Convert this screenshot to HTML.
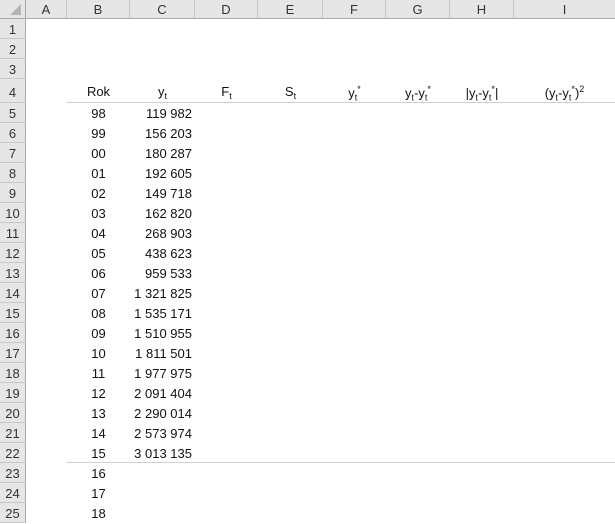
<!DOCTYPE html>
<html><head><style>
body{margin:0;width:615px;height:523px;overflow:hidden;background:#fff;font-family:"Liberation Sans",Arial,sans-serif;font-size:13px;color:#111;position:relative}
.hdr{position:absolute;top:0;left:0;width:615px;height:19px;background:#e6e6e6;border-bottom:1px solid #aaa;box-sizing:border-box}
.ch{position:absolute;top:0;height:18px;line-height:19px;text-align:center;border-right:1px solid #c8c8c8;box-sizing:border-box;color:#333}
.rh{position:absolute;left:0;width:26px;height:20px;line-height:21px;background:#e6e6e6;border-right:1px solid #aaa;border-bottom:1px solid #c8c8c8;box-sizing:border-box;text-align:center;color:#333}
.c{position:absolute;white-space:nowrap}
.b{position:absolute;left:67px;width:63px;text-align:center}
.v{position:absolute;left:130px;width:62px;text-align:right}
.tri{position:absolute;left:10px;top:4px;width:0;height:0;border-left:11px solid transparent;border-bottom:11px solid #b5b5b5}
sub{font-size:9px;vertical-align:-3px}
sup{font-size:9px}
</style></head><body>
<div class="hdr"></div>
<div class="ch" style="left:0;width:26px;border-right:1px solid #aaa"><div class="tri"></div></div>
<div class="ch" style="left:26px;width:41px">A</div>
<div class="ch" style="left:67px;width:63px">B</div>
<div class="ch" style="left:130px;width:65px">C</div>
<div class="ch" style="left:195px;width:63px">D</div>
<div class="ch" style="left:258px;width:65px">E</div>
<div class="ch" style="left:323px;width:63px">F</div>
<div class="ch" style="left:386px;width:64px">G</div>
<div class="ch" style="left:450px;width:64px">H</div>
<div class="ch" style="left:514px;width:101px;border:none">I</div>

<div class="rh" style="top:19px">1</div>
<div class="rh" style="top:39px">2</div>
<div class="rh" style="top:59px">3</div>
<div class="rh" style="top:79px;height:24px;line-height:27px">4</div>
<div class="rh" style="top:103px">5</div>
<div class="rh" style="top:123px">6</div>
<div class="rh" style="top:143px">7</div>
<div class="rh" style="top:163px">8</div>
<div class="rh" style="top:183px">9</div>
<div class="rh" style="top:203px">10</div>
<div class="rh" style="top:223px">11</div>
<div class="rh" style="top:243px">12</div>
<div class="rh" style="top:263px">13</div>
<div class="rh" style="top:283px">14</div>
<div class="rh" style="top:303px">15</div>
<div class="rh" style="top:323px">16</div>
<div class="rh" style="top:343px">17</div>
<div class="rh" style="top:363px">18</div>
<div class="rh" style="top:383px">19</div>
<div class="rh" style="top:403px">20</div>
<div class="rh" style="top:423px">21</div>
<div class="rh" style="top:443px">22</div>
<div class="rh" style="top:463px">23</div>
<div class="rh" style="top:483px">24</div>
<div class="rh" style="top:503px">25</div>

<div style="position:absolute;left:66px;top:102px;width:549px;height:1px;background:#d0d0d0"></div>
<div style="position:absolute;left:66px;top:462px;width:549px;height:1px;background:#d0d0d0"></div>
<div class="c" style="left:67px;width:63px;top:84px;text-align:center">Rok</div>
<div class="c" style="left:130px;width:65px;top:84px;text-align:center">y<sub>t</sub></div>
<div class="c" style="left:195px;width:63px;top:84px;text-align:center">F<sub>t</sub></div>
<div class="c" style="left:258px;width:65px;top:84px;text-align:center">S<sub>t</sub></div>
<div class="c" style="left:323px;width:63px;top:84px;text-align:center">y<sub>t</sub><sup>*</sup></div>
<div class="c" style="left:386px;width:64px;top:84px;text-align:center">y<sub>t</sub>-y<sub>t</sub><sup>*</sup></div>
<div class="c" style="left:450px;width:64px;top:84px;text-align:center">|y<sub>t</sub>-y<sub>t</sub><sup>*</sup>|</div>
<div class="c" style="left:514px;width:101px;top:84px;text-align:center">(y<sub>t</sub>-y<sub>t</sub><sup>*</sup>)<sup>2</sup></div>

<div class="b" style="top:106px">98</div><div class="v" style="top:106px">119 982</div>
<div class="b" style="top:126px">99</div><div class="v" style="top:126px">156 203</div>
<div class="b" style="top:146px">00</div><div class="v" style="top:146px">180 287</div>
<div class="b" style="top:166px">01</div><div class="v" style="top:166px">192 605</div>
<div class="b" style="top:186px">02</div><div class="v" style="top:186px">149 718</div>
<div class="b" style="top:206px">03</div><div class="v" style="top:206px">162 820</div>
<div class="b" style="top:226px">04</div><div class="v" style="top:226px">268 903</div>
<div class="b" style="top:246px">05</div><div class="v" style="top:246px">438 623</div>
<div class="b" style="top:266px">06</div><div class="v" style="top:266px">959 533</div>
<div class="b" style="top:286px">07</div><div class="v" style="top:286px">1 321 825</div>
<div class="b" style="top:306px">08</div><div class="v" style="top:306px">1 535 171</div>
<div class="b" style="top:326px">09</div><div class="v" style="top:326px">1 510 955</div>
<div class="b" style="top:346px">10</div><div class="v" style="top:346px">1 811 501</div>
<div class="b" style="top:366px">11</div><div class="v" style="top:366px">1 977 975</div>
<div class="b" style="top:386px">12</div><div class="v" style="top:386px">2 091 404</div>
<div class="b" style="top:406px">13</div><div class="v" style="top:406px">2 290 014</div>
<div class="b" style="top:426px">14</div><div class="v" style="top:426px">2 573 974</div>
<div class="b" style="top:446px">15</div><div class="v" style="top:446px">3 013 135</div>
<div class="b" style="top:466px">16</div>
<div class="b" style="top:486px">17</div>
<div class="b" style="top:506px">18</div>
</body></html>
